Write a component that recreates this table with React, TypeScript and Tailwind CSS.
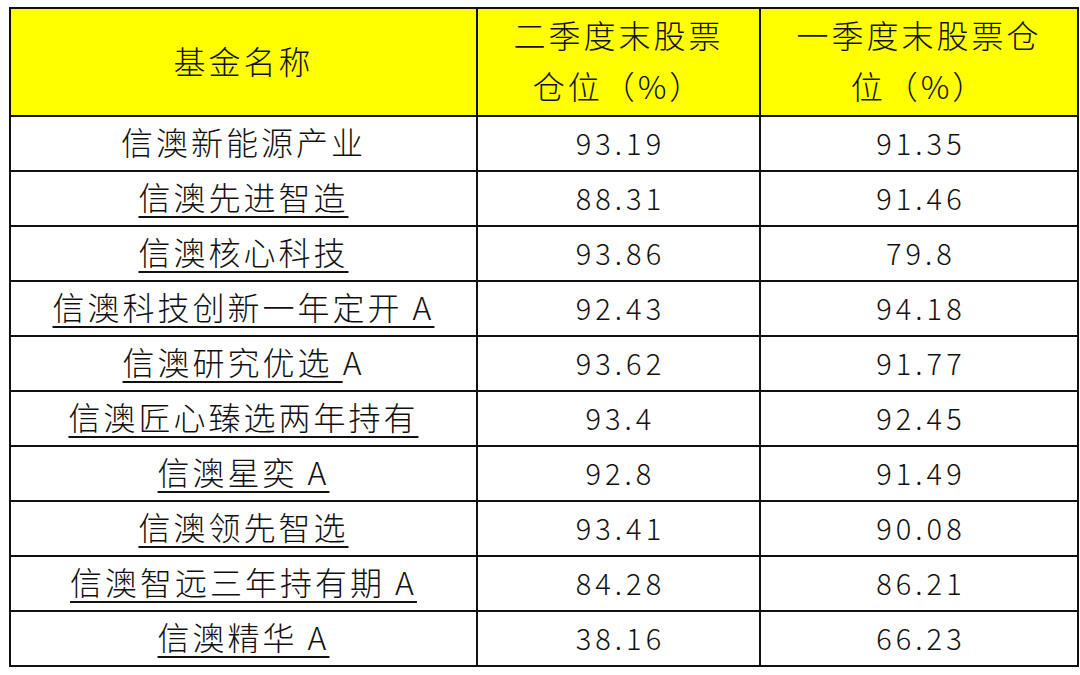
import React from "react";

type Row = { name: string; tail?: string; q2: string; q1: string; underline: boolean };

const rows: Row[] = [
  { name: "信澳新能源产业", q2: "93.19", q1: "91.35", underline: false },
  { name: "信澳先进智造", q2: "88.31", q1: "91.46", underline: true },
  { name: "信澳核心科技", q2: "93.86", q1: "79.8", underline: true },
  { name: "信澳科技创新一年定开 A", q2: "92.43", q1: "94.18", underline: true },
  { name: "信澳研究优选 ", tail: "A", q2: "93.62", q1: "91.77", underline: true },
  { name: "信澳匠心臻选两年持有", q2: "93.4", q1: "92.45", underline: true },
  { name: "信澳星奕 A", q2: "92.8", q1: "91.49", underline: true },
  { name: "信澳领先智选", q2: "93.41", q1: "90.08", underline: true },
  { name: "信澳智远三年持有期 A", q2: "84.28", q1: "86.21", underline: true },
  { name: "信澳精华 A", q2: "38.16", q1: "66.23", underline: true },
];

const font = { fontFamily: '"Noto Sans CJK SC", "Noto Sans", sans-serif' };

export default function App() {
  return (
    <div className="w-[1080px] h-[675px] bg-white pl-[9px] pt-[7px]" style={font}>
      <table className="border-collapse border-2 border-[#111] text-[#111] w-[1068px] table-fixed">
        <colgroup>
          <col className="w-[467px]" />
          <col className="w-[283px]" />
          <col className="w-[318px]" />
        </colgroup>
        <thead>
          <tr className="bg-[#ffff00] h-[108px]">
            <th className="border-2 border-[#111] font-light text-[32px] tracking-[3px] leading-[50px] pb-[4px]">基金名称</th>
            <th className="border-2 border-[#111] font-light text-[32px] tracking-[3px] leading-[51px] pb-[4px]">
              二季度末股票
              <br />
              仓位（%）
            </th>
            <th className="border-2 border-[#111] font-light text-[32px] tracking-[3px] leading-[51px] pb-[4px]">
              一季度末股票仓
              <br />
              位（%）
            </th>
          </tr>
        </thead>
        <tbody>
          {rows.map((r) => (
            <tr key={r.name} className="h-[55px]">
              <td className="border-2 border-[#111] text-center font-light text-[32px] tracking-[3px] leading-none pb-[5px]">
                <span className={r.underline ? "underline decoration-[1.5px] underline-offset-[6px]" : ""}>{r.name}</span>
                {r.tail && <span>{r.tail}</span>}
              </td>
              <td className="border-2 border-[#111] text-center font-light text-[29px] tracking-[4px] leading-none pb-[2px] pl-[4px]">{r.q2}</td>
              <td className="border-2 border-[#111] text-center font-light text-[29px] tracking-[4px] leading-none pb-[2px] pl-[4px]">{r.q1}</td>
            </tr>
          ))}
        </tbody>
      </table>
    </div>
  );
}
